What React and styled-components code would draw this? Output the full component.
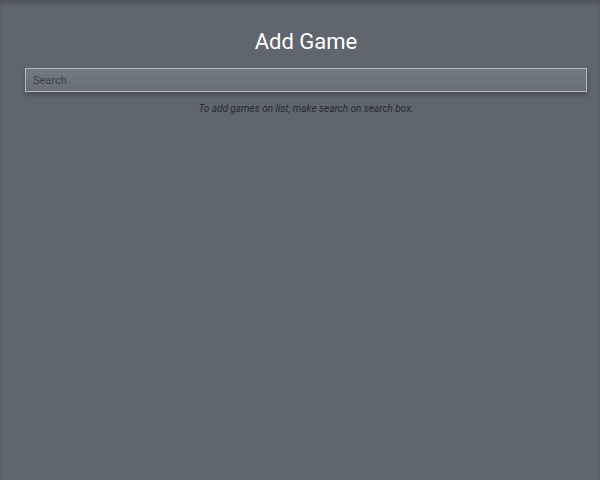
import styled, { createGlobalStyle } from "styled-components";

const GlobalStyle = createGlobalStyle`
  html, body {
    margin: 0;
    height: 100%;
    background: #5f666d;
  }
  body {
    font-family: Roboto, "Liberation Sans", sans-serif;
  }
`;

const Page = styled.div`
  min-height: 480px;
  box-shadow: inset 0 4px 6px -2px rgba(0, 0, 0, 0.25);
  padding: 29px 13px 0 25px;
  box-sizing: border-box;
`;

const Title = styled.h1`
  margin: 0 0 13px;
  text-align: center;
  font-size: 22px;
  font-weight: 400;
  line-height: 26px;
  color: #ffffff;
`;

const SearchInput = styled.input`
  display: block;
  width: 100%;
  height: 24px;
  box-sizing: border-box;
  padding: 0 7px;
  border: 1px solid #b5bbc1;
  background: linear-gradient(#737a81, #676e75);
  color: #e8eaec;
  font-family: inherit;
  font-size: 11px;
  outline: none;
  box-shadow: 0 3px 5px rgba(0, 0, 0, 0.25);

  &::placeholder {
    color: #3c4248;
  }
`;

const Hint = styled.p`
  margin: 11px 0 0;
  text-align: center;
  font-size: 10px;
  font-style: italic;
  color: #262b30;
`;

function App() {
  return (
    <>
      <GlobalStyle />
      <Page>
        <Title>Add Game</Title>
        <SearchInput placeholder="Search" />
        <Hint>To add games on list, make search on search box.</Hint>
      </Page>
    </>
  );
}

export default App;
